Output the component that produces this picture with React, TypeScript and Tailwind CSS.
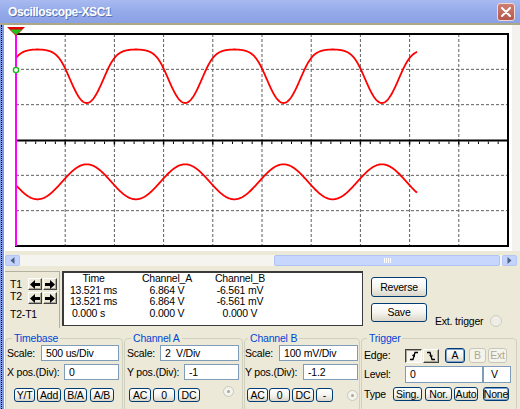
import React from 'react';

// scope geometry, in page pixels
const X0 = 16;
const X1 = 508;
const Y0 = 34;
const Y1 = 246;
const DW = (X1 - X0) / 10;
const DH = (Y1 - Y0) / 6;
const PERIOD = 2 * DW;
const PHASE = 37.5;
const X_END = 417;

// channel A is a sine softly clipped near its top
function clipped(th: number) {
  const s = Math.cos(th);
  return -Math.log(1 + Math.exp(-2.5 * s)) / 2.5;
}

function buildPaths() {
  let lo = Infinity;
  let hi = -Infinity;
  for (let i = 0; i < 400; i++) {
    const v = clipped((i / 400) * Math.PI * 2);
    lo = Math.min(lo, v);
    hi = Math.max(hi, v);
  }
  const top = 49.5;
  const bot = 103;
  let a = '';
  let b = '';
  for (let x = X0; x <= X_END; x += 0.5) {
    const th = (2 * Math.PI * (x - PHASE)) / PERIOD;
    const ya = bot - ((clipped(th) - lo) / (hi - lo)) * (bot - top);
    const yb = 181.8 + 17.5 * Math.cos(th);
    const cmd = x === X0 ? 'M' : 'L';
    a += `${cmd}${x.toFixed(1)} ${ya.toFixed(2)} `;
    b += `${cmd}${x.toFixed(1)} ${yb.toFixed(2)} `;
  }
  return { a, b };
}

function Screen() {
  const { a, b } = buildPaths();
  const vLines = Array.from({ length: 9 }, (_, i) => X0 + (i + 1) * DW);
  const hLines = [1, 2, 4, 5].map((k) => Y0 + k * DH);
  const ticks = Array.from({ length: 49 }, (_, i) => X0 + (i + 1) * (DW / 5));
  const mid = Y0 + 3 * DH + 0.5;

  return (
    <svg width="507" height="226" viewBox="5 25 507 226" className="block">
      {vLines.map((x) => (
        <line key={x} x1={x} y1={Y0} x2={x} y2={Y1} stroke="#5f5f5f" strokeWidth="1" strokeDasharray="3 2" />
      ))}
      {hLines.map((y) => (
        <line key={y} x1={X0} y1={y} x2={X1} y2={y} stroke="#5f5f5f" strokeWidth="1" strokeDasharray="3 2" />
      ))}
      <line x1={X0} y1={mid} x2={X1} y2={mid} stroke="#000" strokeWidth="2" />
      {ticks.map((x, i) => (
        <line key={i} x1={x} y1={mid + 1} x2={x} y2={mid + ((i + 1) % 5 === 0 ? 4 : 3.5)} stroke="#000" strokeWidth={(i + 1) % 5 === 0 ? 1.5 : 1} />
      ))}
      <rect x={X0} y={Y0} width={X1 - X0} height={Y1 - Y0} fill="none" stroke="#000" strokeWidth="2" />
      <path d={a} fill="none" stroke="#ff0000" strokeWidth="1.8" strokeLinejoin="round" />
      <path d={b} fill="none" stroke="#ff0000" strokeWidth="1.8" strokeLinejoin="round" />
      <line x1="16" y1="29" x2="16" y2={Y1} stroke="#ff00ff" strokeWidth="2" />
      <polygon points="7,27 25,27 16,36" fill="#e00000" />
      <polygon points="10,29.5 22,29.5 16,35" fill="#20c020" />
      <circle cx="16" cy="70" r="2.6" fill="#fff" stroke="#10c010" strokeWidth="1.4" />
    </svg>
  );
}

const xp =
  'flex items-center justify-center rounded-[3px] border border-[#003C74] bg-linear-to-b from-white via-[#F5F4EF] to-[#DAD6C8] text-black';
const xpOff = 'flex items-center justify-center rounded-[3px] border border-[#C9C7BA] bg-[#F5F4EA] text-[#ACA899]';
const raised =
  'flex items-center justify-center bg-[#ECE9D8] border border-t-white border-l-white border-r-[#404040] border-b-[#404040] shadow-[inset_-1px_-1px_0_#ACA899]';
const sunken =
  'flex items-center justify-center bg-[#F6F5EF] border border-t-[#404040] border-l-[#404040] border-r-white border-b-white shadow-[inset_1px_1px_0_#ACA899]';
const field = 'h-full border border-[#7F9DB9] bg-white flex items-center pl-[4px]';

function Arrow({ dir }: { dir: 'l' | 'r' }) {
  return (
    <svg width="10" height="9" viewBox="0 0 10 9">
      {dir === 'l' ? (
        <path d="M0 4.5 L5 0 V3 H10 V6 H5 V9 Z" fill="#000" />
      ) : (
        <path d="M10 4.5 L5 0 V3 H0 V6 H5 V9 Z" fill="#000" />
      )}
    </svg>
  );
}

function Radio({ dot, className }: { dot?: boolean; className: string }) {
  return (
    <div className={`w-[11px] h-[11px] rounded-full border border-[#CAC8BB] bg-[#F4F3EE] flex items-center justify-center ${className}`}>
      {dot && <div className="w-[3px] h-[3px] rounded-full bg-[#ACA899]" />}
    </div>
  );
}

function ScrollArrow({ dir }: { dir: 'l' | 'r' }) {
  return (
    <div className="w-[15px] h-full rounded-[2px] bg-[#C3D3FC] border border-[#B3C6F5] flex items-center justify-center">
      <svg width="5" height="7" viewBox="0 0 5 7">
        <path d={dir === 'l' ? 'M4.5 0 V7 L0.5 3.5 Z' : 'M0.5 0 V7 L4.5 3.5 Z'} fill="#4D6185" />
      </svg>
    </div>
  );
}

export default function App() {
  return (
    <div className="w-[520px] h-[409px] overflow-hidden bg-[#ECE9D8] flex flex-col font-['Liberation_Sans',Arial,sans-serif] text-[10.5px] tracking-[-0.2px] leading-none text-black">
      {/* title bar */}
      <div className="h-[23px] shrink-0 flex items-center justify-between pl-[8px] pr-[5px] bg-linear-to-b from-[#A8BAF0] via-[#94AAEA] to-[#8BA1E5]">
        <span className="text-white font-bold text-[12px] tracking-[-0.4px] [text-shadow:1px_1px_0_#5A72B5]">Oscilloscope-XSC1</span>
        <div className="w-[18px] h-[18px] rounded-[3px] border border-[#F2D8D4] bg-linear-to-b from-[#CF7F74] to-[#B4574E] flex items-center justify-center">
          <svg width="10" height="10" viewBox="0 0 10 10">
            <path d="M1 1 L9 9 M9 1 L1 9" stroke="#fff" strokeWidth="2" strokeLinecap="round" />
          </svg>
        </div>
      </div>
      <div className="h-[2px] shrink-0 bg-[#ADA783]" />

      <div className="flex-1 flex min-h-0">
        <div className="w-[4px] shrink-0 bg-[#7E9AE2]">
          <div className="ml-[1px] h-full w-0 border-l border-dotted border-black" />
        </div>

        <div className="flex-1 flex flex-col border-l border-white">
          {/* scope screen */}
          <div className="h-[226px] shrink-0 flex">
            <div className="w-[507px] h-full bg-white">
              <Screen />
            </div>
            <div className="flex-1 bg-[#F3F2EE]" />
          </div>

          {/* horizontal scrollbar */}
          <div className="mt-[4px] h-[11px] shrink-0 flex pr-[3px]">
            <ScrollArrow dir="l" />
            <div className="flex-1 flex bg-[#F5F4EE]">
              <div className="w-[254px]" />
              <div className="w-[226px] h-full rounded-[2px] bg-[#C6D6FC] border border-[#AFC4F3] flex items-center justify-center gap-[1px]">
                <div className="w-[1px] h-[5px] bg-white" />
                <div className="w-[1px] h-[5px] bg-white" />
                <div className="w-[1px] h-[5px] bg-white" />
                <div className="w-[1px] h-[5px] bg-white" />
              </div>
            </div>
            <ScrollArrow dir="r" />
          </div>

          {/* cursors, readout and buttons */}
          <div className="mt-[4px] h-[58px] shrink-0 flex items-start">
            <div className="mt-[1px] w-[55px] h-[57px] border-t border-r border-[#B3B09F] flex flex-col pl-[5px]">
              <div className="flex mt-[6px]">
                <div className="flex flex-col w-[18px]">
                  <span className="leading-[12px]">T1</span>
                  <span className="leading-[12px]">T2</span>
                </div>
                <div className="grid grid-cols-[14px_14px] gap-x-[1px] gap-y-[2px]">
                  <div className={`${raised} h-[12px]`}><Arrow dir="l" /></div>
                  <div className={`${raised} h-[12px]`}><Arrow dir="r" /></div>
                  <div className={`${raised} h-[12px]`}><Arrow dir="l" /></div>
                  <div className={`${raised} h-[12px]`}><Arrow dir="r" /></div>
                </div>
              </div>
              <span className="mt-[4px] leading-[12px]">T2-T1</span>
            </div>

            <div className="ml-[2px] mt-[1px] w-[301px] h-[55px] bg-white border-t-2 border-l-2 border-r border-b border-[#3A3A3A]">
              <div className="grid grid-cols-[59px_88px_58px] auto-rows-[11.5px] leading-[11.5px] text-center">
                <span>Time</span>
                <span>Channel_A</span>
                <span>Channel_B</span>
                <span>13.521 ms</span>
                <span>6.864 V</span>
                <span>-6.561 mV</span>
                <span>13.521 ms</span>
                <span>6.864 V</span>
                <span>-6.561 mV</span>
                <span className="pr-[10px]">0.000 s</span>
                <span>0.000 V</span>
                <span>0.000 V</span>
              </div>
            </div>

            <div className="ml-[8px] w-[56px] flex flex-col">
              <div className={`${xp} mt-[7px] h-[20px]`}>Reverse</div>
              <div className={`${xp} mt-[6px] h-[19px]`}>Save</div>
            </div>

            <div className="ml-[8px] mt-[45px] h-[12px] flex items-center">
              <span>Ext. trigger</span>
              <div className="ml-[7px] w-[12px] h-[12px] rounded-full border border-[#CFCDBF] bg-[#EEEDE6]" />
            </div>
          </div>

          {/* control groups */}
          <div className="mt-[4px] h-[80px] shrink-0 flex">
            <fieldset className="w-[118px] h-full border border-[#D0D0BF] rounded-[4px]">
              <legend className="ml-[6px] px-[2px] leading-[12px] text-[#0046D5]">Timebase</legend>
              <div className="flex flex-col pl-[1px] pr-[3px]">
                <div className="mt-[1px] h-[16px] flex items-center">
                  <span>Scale:</span>
                  <div className={`${field} ml-auto w-[78px]`}>500 us/Div</div>
                </div>
                <div className="mt-[3px] h-[16px] flex items-center">
                  <span>X pos.(Div):</span>
                  <div className={`${field} ml-auto w-[55px]`}>0</div>
                </div>
                <div className="mt-[8px] h-[14px] flex">
                  <div className={`${xp} ml-[7px] w-[21px]`}>Y/T</div>
                  <div className={`${xp} ml-[2px] w-[24px]`}>Add</div>
                  <div className={`${xp} ml-[3px] w-[23px]`}>B/A</div>
                  <div className={`${xp} ml-[3px] w-[24px]`}>A/B</div>
                </div>
              </div>
            </fieldset>

            <fieldset className="ml-[1px] w-[119px] h-full border border-[#D0D0BF] rounded-[4px]">
              <legend className="ml-[6px] px-[2px] leading-[12px] text-[#0046D5]">Channel A</legend>
              <div className="flex flex-col pl-[2px] pr-[3px]">
                <div className="mt-[1px] h-[16px] flex items-center">
                  <span>Scale:</span>
                  <div className={`${field} ml-auto w-[79px]`}>2&nbsp; V/Div</div>
                </div>
                <div className="mt-[3px] h-[16px] flex items-center">
                  <span>Y pos.(Div):</span>
                  <div className={`${field} ml-auto w-[55px]`}>-1</div>
                </div>
                <div className="mt-[8px] h-[14px] flex">
                  <div className={`${xp} ml-[2px] w-[22px]`}>AC</div>
                  <div className={`${xp} ml-[2px] w-[22px]`}>0</div>
                  <div className={`${xp} ml-[3px] w-[22px]`}>DC</div>
                  <Radio dot className="ml-[23px] -mt-[2px]" />
                </div>
              </div>
            </fieldset>

            <fieldset className="ml-[1px] w-[116px] h-full border border-[#D0D0BF] rounded-[4px]">
              <legend className="ml-[3px] px-[2px] leading-[12px] text-[#0046D5]">Channel B</legend>
              <div className="flex flex-col pr-[1px]">
                <div className="mt-[1px] h-[16px] flex items-center">
                  <span>Scale:</span>
                  <div className={`${field} ml-auto w-[79px]`}>100 mV/Div</div>
                </div>
                <div className="mt-[3px] h-[16px] flex items-center">
                  <span>Y pos.(Div):</span>
                  <div className={`${field} ml-auto w-[55px]`}>-1.2</div>
                </div>
                <div className="mt-[8px] h-[14px] flex items-center">
                  <div className={`${xp} ml-[2px] w-[21px] h-full`}>AC</div>
                  <div className={`${xp} ml-[1px] w-[21px] h-full`}>0</div>
                  <div className={`${xp} ml-[2px] w-[22px] h-full`}>DC</div>
                  <div className={`${xp} ml-[2px] w-[17px] h-full`}>-</div>
                  <Radio dot className="ml-[14px]" />
                </div>
              </div>
            </fieldset>

            <fieldset className="ml-[1px] w-[156px] h-full border border-[#D0D0BF] rounded-[4px]">
              <legend className="ml-[5px] px-[2px] leading-[12px] text-[#0046D5]">Trigger</legend>
              <div className="flex flex-col pl-[2px]">
                <div className="mt-[4px] h-[15px] flex items-center">
                  <span className="w-[41px]">Edge:</span>
                  <div className={`${sunken} w-[17px] h-[14px]`}>
                    <svg width="10" height="10" viewBox="0 0 10 10">
                      <path d="M1 8.5 H4 L6 1.5 H9" fill="none" stroke="#000" strokeWidth="1.3" />
                      <path d="M3.2 4.6 L5 4 L5.6 5.8" fill="none" stroke="#000" strokeWidth="1.1" />
                    </svg>
                  </div>
                  <div className={`${raised} ml-[1px] w-[16px] h-[14px]`}>
                    <svg width="10" height="10" viewBox="0 0 10 10">
                      <path d="M1 1.5 H4 L6 8.5 H9" fill="none" stroke="#000" strokeWidth="1.3" />
                      <path d="M3.6 4.2 L5.2 5.6 L6.6 4.6" fill="none" stroke="#000" strokeWidth="1.1" />
                    </svg>
                  </div>
                  <div className={`${xp} ml-[6px] w-[20px] h-full shadow-[inset_0_0_0_1px_#7DA2CE]`}>A</div>
                  <div className={`${xpOff} ml-[4px] w-[17px] h-full`}>B</div>
                  <div className={`${xpOff} ml-[2px] w-[19px] h-full`}>Ext</div>
                </div>
                <div className="mt-[3px] h-[17px] flex items-center">
                  <span className="w-[41px]">Level:</span>
                  <div className={`${field} w-[78px]`}>0</div>
                  <div className={`${field} w-[28px] pl-[7px]`}>V</div>
                </div>
                <div className="mt-[4px] h-[14px] flex">
                  <span className="w-[29px] self-center">Type</span>
                  <div className={`${xp} w-[29px]`}>Sing.</div>
                  <div className={`${xp} ml-[3px] w-[27px]`}>Nor.</div>
                  <div className={`${xp} ml-[2px] w-[24px]`}>Auto</div>
                  <div className={`${xp} ml-[5px] w-[26px] shadow-[inset_0_0_0_1px_#7DA2CE]`}>None</div>
                </div>
              </div>
            </fieldset>
          </div>
        </div>
      </div>
    </div>
  );
}
